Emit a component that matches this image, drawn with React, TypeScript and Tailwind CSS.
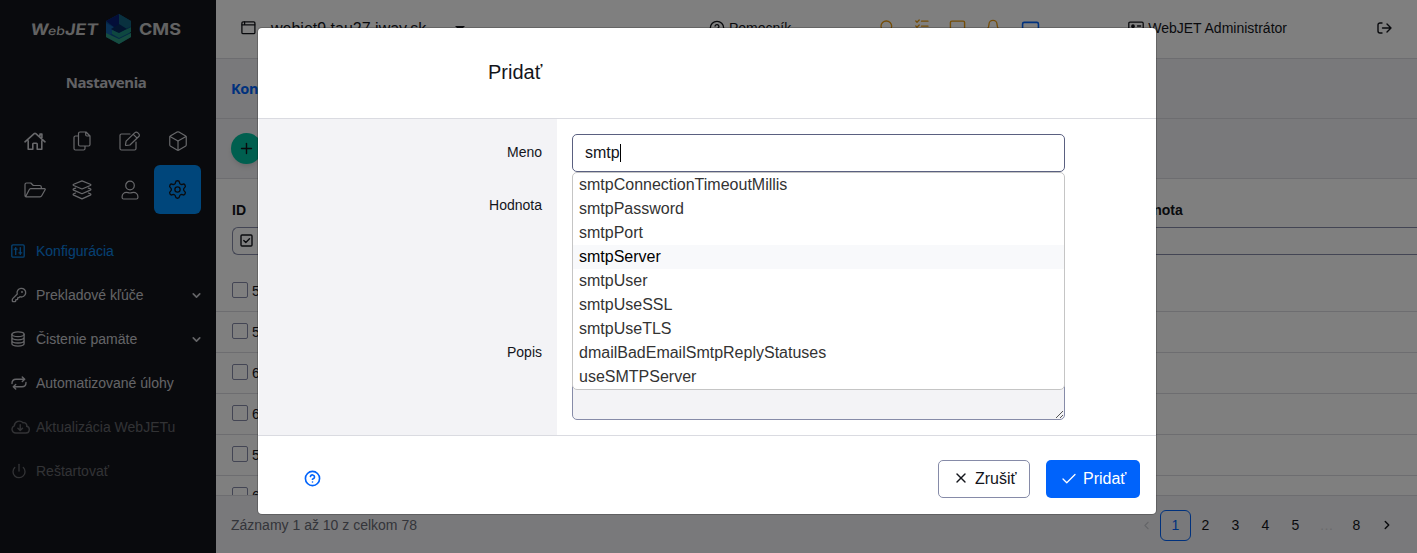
import React from "react";
import {
  Bell,
  Box,
  Check,
  ChevronDown,
  ChevronLeft,
  ChevronRight,
  CircleQuestionMark,
  KeyRound,
  MessageSquare,
  Monitor,
  Plus,
  Power,
  Search,
  Settings,
  X,
} from "lucide-react";

type GlyphProps = { w: number; h: number; sw?: number; className?: string; children: React.ReactNode };

function Glyph({ w, h, sw = 1.2, className = "", children }: GlyphProps) {
  return (
    <svg
      width={w}
      height={h}
      viewBox={`0 0 ${w} ${h}`}
      fill="none"
      stroke="currentColor"
      strokeWidth={sw}
      strokeLinecap="round"
      strokeLinejoin="round"
      className={`shrink-0 ${className}`}
    >
      {children}
    </svg>
  );
}

const HomeIcon = () => (
  <Glyph w={22} h={20} sw={1.6}>
    <path d="M1 10.800 10.200 2.700a1.200 1.200 0 0 1 1.600 0L21 10.800M4.200 9.800v8.400h4.600v-5.200a.8.8 0 0 1 .8-.8h2.800a.8.8 0 0 1 .8.800v5.200h4.600V9.800M16 5.200V3.100h1.900v4" />
  </Glyph>
);
const FilesIcon = () => (
  <Glyph w={18} h={20}>
    <path d="M7 1h6l4 4v8.500a1.500 1.500 0 0 1-1.500 1.500H7a1.500 1.500 0 0 1-1.500-1.500v-11A1.500 1.500 0 0 1 7 1ZM12.700 1.200v2.600a1.200 1.200 0 0 0 1.200 1.200h2.800M5.300 5H2.500A1.500 1.500 0 0 0 1 6.500v11A1.500 1.500 0 0 0 2.500 19h8a1.500 1.500 0 0 0 1.500-1.500V15.200" />
  </Glyph>
);
const EditIcon = () => (
  <Glyph w={22} h={20}>
    <path d="M11 3H2.500A1.500 1.500 0 0 0 1 4.500v13A1.500 1.500 0 0 0 2.500 19h13a1.500 1.500 0 0 0 1.500-1.500V11M6.500 13.800l.6-3.700 8.800-8.500a1.900 1.900 0 0 1 2.700 0l1.200 1.200a1.900 1.900 0 0 1 0 2.700l-8.900 8.500-3.700.5c-.5 0-.8-.2-.7-.7ZM14.300 3.300l3.800 3.800" />
  </Glyph>
);
const FolderIcon = () => (
  <Glyph w={22} h={16}>
    <path d="M1 13.500v-11A1.500 1.500 0 0 1 2.500 1h4.300l2.500 2.500h6.500a1.500 1.500 0 0 1 1.500 1.500v1.700M1.600 14.700l3.600-7a1.800 1.800 0 0 1 1.500-1H20.500c.6 0 .9.600.6 1.100l-3.400 6a2 2 0 0 1-1.700 1.100H2.200C1.400 14.900 1 14.400 1 13.500" />
  </Glyph>
);
const StackIcon = () => (
  <Glyph w={20} h={20}>
    <path d="m10 .9 8.300 3.300c.8.400.8.900 0 1.300L10 9 1.700 5.500c-.8-.4-.8-.9 0-1.300ZM3.600 8.100l-1.900.7c-.8.400-.8.900 0 1.300l8.300 3.600 8.300-3.600c.8-.4.800-.9 0-1.300l-1.900-.7M3.600 13l-1.900.8c-.8.400-.8.900 0 1.300L10 18.900l8.300-3.800c.8-.4.800-.9 0-1.300l-1.900-.8" />
  </Glyph>
);
const UserIcon = () => (
  <Glyph w={18} h={20}>
    <circle cx="9" cy="5.500" r="4.300" />
    <path d="M5.500 12.300c1.400 0 1.700.7 3.500.7s2.100-.7 3.500-.7c2.400 0 4.400 1.900 4.400 4.400v.8c0 .8-.7 1.500-1.500 1.500H2.600c-.8 0-1.500-.7-1.500-1.500v-.8c0-2.500 2-4.400 4.400-4.400Z" />
  </Glyph>
);
const SlidersIcon = () => (
  <Glyph w={14} h={14} sw={1.3}>
    <rect x=".8" y=".8" width="12.400" height="12.400" rx="1.200" />
    <path d="M4.700 3.600v6.800M3.300 5.200h2.800M9.300 3.600v6.800M7.900 8.800h2.800" />
  </Glyph>
);
const DatabaseIcon = () => (
  <Glyph w={14} h={16} sw={1.3}>
    <ellipse cx="7" cy="3.300" rx="6.100" ry="2.400" />
    <path d="M.9 3.300v9.300c0 1.400 2.700 2.500 6.100 2.500s6.100-1.100 6.100-2.500V3.300M.9 6.300c0 1.400 2.700 2.500 6.100 2.500s6.100-1.100 6.100-2.500M.9 9.500C.9 10.900 3.600 12 7 12s6.100-1.100 6.100-2.500" />
  </Glyph>
);
const RepeatIcon = () => (
  <Glyph w={16} h={14} sw={1.400}>
    <path d="M1 7.500C1 4.700 2.600 3.200 5 3.200h8.300M11.300.9l2.400 2.300-2.400 2.300M15 6.500c0 2.800-1.600 4.300-4 4.300H2.700M4.700 8.500l-2.400 2.300 2.400 2.300" />
  </Glyph>
);
const CloudIcon = () => (
  <Glyph w={19} h={14} sw={1.400}>
    <path d="M4.800 13h10a3.400 3.400 0 0 0 .9-6.700 2.900 2.900 0 0 0-3.700-3.500A5 5 0 0 0 3.300 5.900 3.700 3.700 0 0 0 4.800 13ZM9.200 4.800v5.400M6.900 8.200l2.300 2.300 2.300-2.300" />
  </Glyph>
);
const WindowIcon = () => (
  <Glyph w={15} h={14} sw={1.300}>
    <rect x=".9" y=".9" width="13" height="11.800" rx="1.200" />
    <path d="M1 3.800h12.800M3.600 1v2.500" />
  </Glyph>
);
const TasksIcon = () => (
  <Glyph w={14} h={14} sw={1.300}>
    <path d="m.8 2 1.200 1.200L4.200 1M6.500 2.200H13M.8 7l1.200 1.200L4.200 6M6.500 7.200H13M2 12h.500M6.500 12H13" />
  </Glyph>
);
const CardIcon = () => (
  <Glyph w={16} h={14} sw={1.300}>
    <rect x=".8" y="1.200" width="14.400" height="11.400" rx="1.200" />
    <circle cx="5" cy="5.200" r="1.200" fill="currentColor" />
    <path d="M2.800 9.700c0-2 4.400-2 4.400 0M9.500 5h3.200M9.500 8h3.200" />
  </Glyph>
);
const ExitIcon = () => (
  <Glyph w={15} h={12} sw={1.400}>
    <path d="M5 1H3a2 2 0 0 0-2 2v6a2 2 0 0 0 2 2h2M5.500 6H14M10 2l4 4-4 4" />
  </Glyph>
);

function Logo() {
  return (
    <svg width="152" height="32" viewBox="0 0 152 32" className="shrink-0">
      <g fill="#c4c4c4" fontFamily="Inter" fontWeight="700">
        <g transform="translate(0 21) skewX(-8)">
          <text x="0" y="0" fontSize="16" textLength="18" lengthAdjust="spacingAndGlyphs">W</text>
          <text x="17.500" y="0" fontSize="12" textLength="17" lengthAdjust="spacingAndGlyphs" fontWeight="500">eb</text>
          <text x="34.500" y="0" fontSize="16" textLength="33" lengthAdjust="spacingAndGlyphs">JET</text>
        </g>
        <text x="109" y="21" fontSize="16" textLength="42" lengthAdjust="spacingAndGlyphs">CMS</text>
      </g>
      <path d="M76 7 89 0l12 7v6l-6 3 6 3v4l-12 7-13-7Z" fill="#0b4e8c" />
      <path d="M76 7 89 0v17Z" fill="#071c72" />
      <path d="m89 0 12 7v5l-12 6Z" fill="#12627e" />
      <path d="m76 9 13 7-13 7Z" fill="#1260a8" />
      <path d="m89 10-8 5 8 5 8-5Z" fill="#06295f" />
      <path d="m101 13-12 6-7-3v4l7 4 12-6Z" fill="#1c8f80" />
      <path d="m101 19-12 6-13-6v4l13 7 12-7Z" fill="#2c9a80" />
    </svg>
  );
}

const tiles = [HomeIcon, FilesIcon, EditIcon, null, FolderIcon, StackIcon, UserIcon];

const menu = [
  { label: "Konfigurácia", icon: <SlidersIcon />, tone: "text-[#0c83e4]", open: false },
  { label: "Prekladové kľúče", icon: <KeyRound size={16} strokeWidth={2} />, tone: "text-[#c8c9ce]", open: true },
  { label: "Čistenie pamäte", icon: <DatabaseIcon />, tone: "text-[#c8c9ce]", open: true },
  { label: "Automatizované úlohy", icon: <RepeatIcon />, tone: "text-[#c8c9ce]", open: false },
  { label: "Aktualizácia WebJETu", icon: <CloudIcon />, tone: "text-[#65666b]", open: false },
  { label: "Reštartovať", icon: <Power size={16} strokeWidth={2} />, tone: "text-[#65666b]", open: false },
];

function Sidebar() {
  return (
    <aside className="flex w-[216px] shrink-0 flex-col bg-[#13151b]">
      <div className="flex h-[59px] justify-center pt-[14px] pr-[4px]">
        <Logo />
      </div>
      <div className="flex h-[58px] justify-center pt-[12px] pr-1 font-['Noto_Sans'] text-[15px] leading-[22px] font-bold tracking-[-0.45px] text-[#c4c5ca]">
        Nastavenia
      </div>
      <nav className="grid h-[97px] grid-cols-[47px_48px_48px_47px] grid-rows-[48px_49px] pl-[11px] text-[#d0d1d6]">
        {tiles.slice(0, 3).map((Icon, i) => (
          <span key={i} className="flex items-center justify-center">{Icon && <Icon />}</span>
        ))}
        <span className="flex items-center justify-center"><Box size={22} strokeWidth={1.300} /></span>
        {tiles.slice(4).map((Icon, i) => (
          <span key={i} className="flex items-center justify-center">{Icon && <Icon />}</span>
        ))}
        <span className="flex items-center justify-center rounded-md bg-[#008df6] text-[#13151b]">
          <Settings size={21} strokeWidth={1.500} />
        </span>
      </nav>
      <ul className="mt-[15px]">
        {menu.map((m) => (
          <li key={m.label} className={`flex h-11 items-center pr-[13px] pl-[11px] text-[14px] ${m.tone}`}>
            <span className="flex w-[25px]">{m.icon}</span>
            <span className="whitespace-nowrap">{m.label}</span>
            {m.open && <ChevronDown size={13} strokeWidth={3} className="ml-auto" />}
          </li>
        ))}
      </ul>
    </aside>
  );
}

function TopBar() {
  return (
    <header className="flex h-[59px] shrink-0 items-center border-b border-[#dadbe1] pb-[2px] text-[14px] text-[#13151b]">
      <span className="flex w-[55px] pl-[25px]"><WindowIcon /></span>
      <span className="w-[184px] pt-[2px] text-[16px]">webjet9.tau27.iway.sk</span>
      <svg width="10" height="5" className="mr-[244px]"><path d="M0 0h10L5 5Z" fill="#13151b" /></svg>
      <CircleQuestionMark size={16} strokeWidth={2} />
      <span className="ml-[4px] w-[150px]">Pomocník</span>
      <span className="flex w-[161px] justify-between text-[#e89a10]">
        <Search size={16} strokeWidth={2} className="mt-px" />
        <span className="mt-[1px]"><TasksIcon /></span>
        <MessageSquare size={17} strokeWidth={2} className="mt-px" />
        <Bell size={16} strokeWidth={2} className="mt-px" />
        <Monitor size={19} strokeWidth={2} className="mt-[2px] text-[#0063fb]" />
      </span>
      <span className="ml-auto flex items-center gap-[4px]"><CardIcon />WebJET Administrátor</span>
      <span className="mr-[25px] ml-[90px]"><ExitIcon /></span>
    </header>
  );
}

function DataPage() {
  return (
    <main className="flex min-w-0 flex-1 flex-col bg-white text-[14px] text-[#13151b]">
      <TopBar />
      <div className="flex h-[60px] shrink-0 items-center border-b border-[#dadbe1] bg-[#f3f3f6] pt-px pl-[15px] font-['Noto_Sans'] text-[14.500px] font-bold tracking-[-0.3px] text-[#0063fb]">
        Konfigurácia
      </div>
      <div className="flex h-[60px] shrink-0 items-center border-b border-[#dadbe1] bg-[#f3f3f6] pl-[15px]">
        <span className="flex size-[31px] items-center justify-center rounded-full bg-[#00be9f] shadow-md">
          <Plus size={17} strokeWidth={2} />
        </span>
      </div>
      <div className="flex h-[48px] shrink-0 items-end justify-between pb-[6px] pl-4 text-[14px] font-bold">
        <span>ID</span>
        <span className="w-[291px]">Hodnota</span>
      </div>
      <div className="ml-4 flex h-[28px] shrink-0 items-center rounded-l-md border border-r-0 border-[#868ba8] pb-px pl-[7px]">
        <Glyph w={13} h={13} sw={1.400}>
          <rect x="1" y="1" width="11" height="11" rx="1" />
          <path d="m3.800 6.500 2 2L9.500 4.700" />
        </Glyph>
      </div>
      <div className="flex min-h-0 flex-1 flex-col overflow-hidden pt-[16px]">
        {["57", "58", "60", "61", "59", "62"].map((id) => (
          <div key={id} className="flex h-[41px] shrink-0 items-center gap-1 border-b border-[#dadbe1] pl-4">
            <span className="mb-[2px] size-4 rounded-[2px] border border-[#868ba8]" />
            <span>{id}</span>
          </div>
        ))}
      </div>
      <footer className="flex h-[58px] shrink-0 items-center border-t border-[#dadbe1] bg-[#f3f3f6] pr-[15px] pl-[15px]">
        <span className="mt-px flex-1 text-[#686a74]">Záznamy 1 až 10 z celkom 78</span>
        <div className="mt-px flex items-center text-center">
          <ChevronLeft size={13} className="mr-[7px] text-[#c9cad0]" />
          <span className="flex h-[31px] w-[31px] items-center justify-center rounded-md border border-[#0063fb] text-[#0063fb]">1</span>
          <span className="w-[29px]">2</span>
          <span className="w-[31px]">3</span>
          <span className="w-[29px]">4</span>
          <span className="w-[31px]">5</span>
          <span className="w-[31px] text-[#d4d5da]">…</span>
          <span className="w-[29px]">8</span>
          <span className="flex w-[31px] justify-center"><ChevronRight size={14} strokeWidth={2.500} /></span>
        </div>
      </footer>
    </main>
  );
}

const options = [
  "smtpConnectionTimeoutMillis",
  "smtpPassword",
  "smtpPort",
  "smtpServer",
  "smtpUser",
  "smtpUseSSL",
  "smtpUseTLS",
  "dmailBadEmailSmtpReplyStatuses",
  "useSMTPServer",
];

function Dialog() {
  return (
    <section className="flex h-[486px] w-[898px] flex-col overflow-hidden rounded-[4px] bg-white text-[#13151b] shadow-[0_0_0_1px_rgba(0,0,0,0.2)]">
      <h2 className="h-[91px] shrink-0 border-b border-[#dadbe1] pt-[30px] pl-[230px] text-[20px] leading-[28px]">Pridať</h2>
      <div className="flex h-[316px] shrink-0 pl-px">
        <div className="flex w-[298px] flex-col bg-[#f3f3f6] pr-[15px] text-right text-[14px] leading-[20px]">
          <span className="mt-[23px]">Meno</span>
          <span className="mt-[33px]">Hodnota</span>
          <span className="mt-[127px]">Popis</span>
        </div>
        <div className="relative ml-[15px] flex w-[493px] flex-col pt-[15px] text-[16px]">
          <div className="flex h-[38px] items-center rounded-[5px] border border-[#5a6080] bg-white pl-[12px]">
            <span>smtp</span>
            <span className="h-[18px] w-px bg-black" />
          </div>
          <div className="mt-[15px] h-[133px] rounded-[5px] border border-[#868ba8] bg-[#f3f3f6]" />
          <div className="mt-[14px] flex h-[86px] items-end justify-end rounded-[5px] border border-[#868ba8] bg-[#f3f3f6]">
            <svg width="9" height="9"><path d="M1 8 8 1M5 8l3-3" stroke="#444" strokeWidth=".9" /></svg>
          </div>
          <ul className="absolute top-[53px] left-0 w-[493px] rounded-[5px] border border-[#c5c5c5] bg-white text-[#333]">
            {options.map((o) => (
              <li key={o} className={o === "smtpServer" ? "h-6 bg-[#f8f9fb] pl-[6px] leading-6 text-black" : "h-6 pl-[6px] leading-6"}>
                {o}
              </li>
            ))}
          </ul>
        </div>
      </div>
      <div className="flex flex-1 items-center border-t border-[#dadbe1] pt-[8px] pr-4 pl-[46px] text-[16px]">
        <CircleQuestionMark size={17} strokeWidth={2.300} className="mr-auto mb-[2px] text-[#0063fb]" />
        <button className="mr-4 flex h-[38px] w-[92px] items-center rounded-[5px] border border-[#868ba8] pl-[14px]">
          <X size={16} strokeWidth={2} className="mr-[6px] mb-[2px]" />
          Zrušiť
        </button>
        <button className="flex h-[38px] w-[94px] items-center rounded-[5px] bg-[#0063fb] pl-[14px] text-white">
          <Check size={18} strokeWidth={1.700} className="mr-[5px] mb-px" />
          Pridať
        </button>
      </div>
    </section>
  );
}

export default function App() {
  return (
    <div className="relative flex h-[553px] w-[1417px] overflow-hidden font-['Liberation_Sans',sans-serif]">
      <Sidebar />
      <DataPage />
      <div className="absolute inset-0 flex bg-black/50 pt-[28px] pl-[258px]">
        <Dialog />
      </div>
    </div>
  );
}
